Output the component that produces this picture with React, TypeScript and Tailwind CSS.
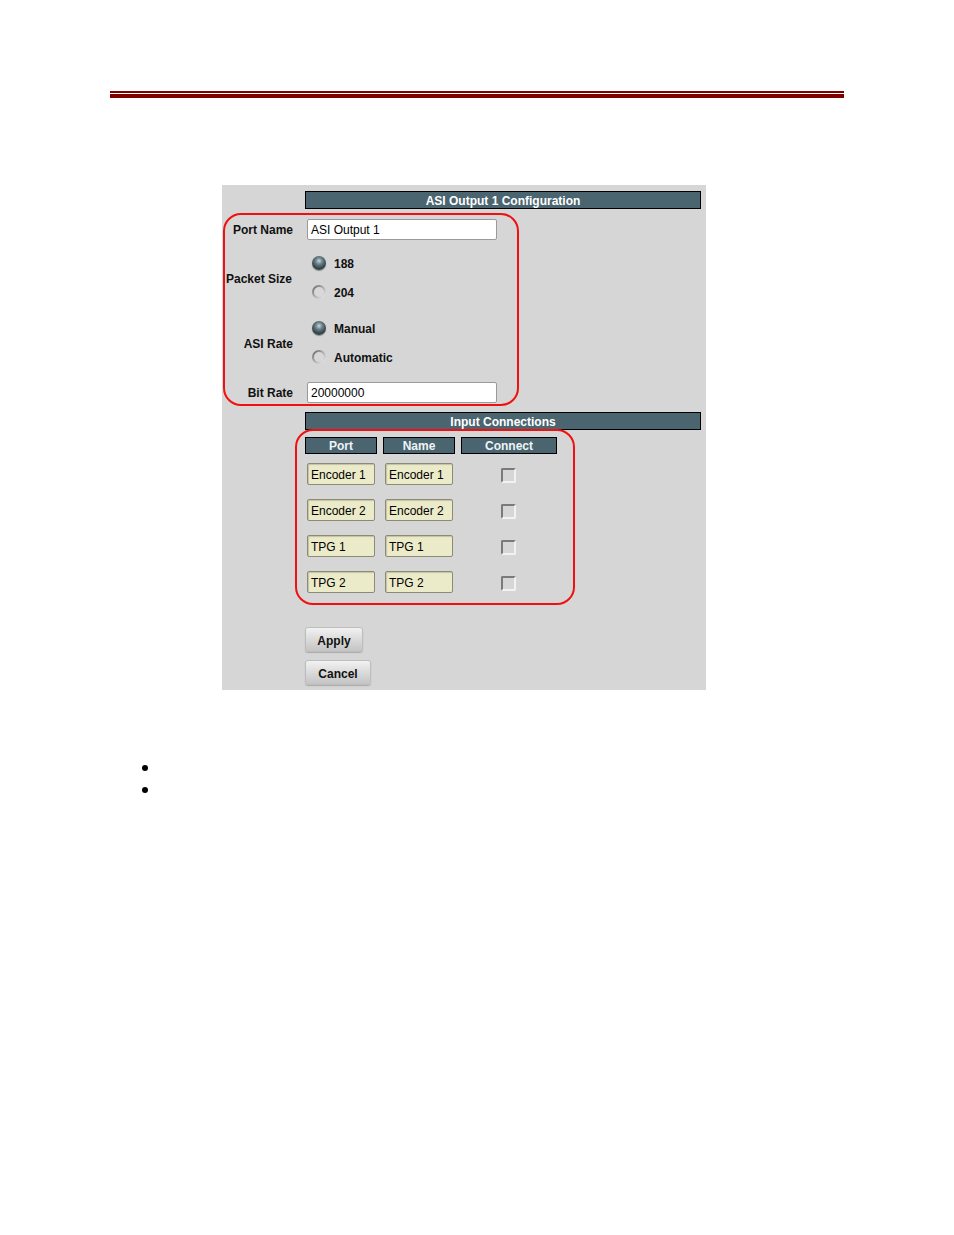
const font = { fontFamily: '"Liberation Sans", Arial, sans-serif' };

const Radio = ({ checked, label }: { checked?: boolean; label: string }) => (
  <div className="flex items-center h-[20px] pl-[5px]">
    {checked ? (
      <span className="w-[14px] h-[14px] rounded-full bg-[radial-gradient(circle_at_50%_35%,#c9d6da_0%,#6f858d_28%,#3a4b52_60%,#1c2529_100%)] shadow-[0_1px_1px_rgba(0,0,0,0.35)]" />
    ) : (
      <span className="w-[14px] h-[14px] rounded-full bg-[linear-gradient(135deg,#5e5e5e_0%,#a8a8a8_45%,#f4f4f4_100%)] flex items-center justify-center">
        <span className="w-[10px] h-[10px] rounded-full bg-[#d8d8d8]" />
      </span>
    )}
    <span className="ml-[8px] pt-[1px] text-[12px] font-bold text-[#111]">{label}</span>
  </div>
);

const Field = ({ value }: { value: string }) => (
  <div className="w-[68px] h-[22px] flex items-center pl-[3px] pt-[1px] text-[12px] text-black bg-[#ecebc9] border border-[#8c8b76] rounded-[2px] shadow-[inset_1px_1px_1px_rgba(0,0,0,0.18)]">
    {value}
  </div>
);

const Check = () => (
  <div className="w-[15px] h-[15px] rounded-[2px] border-2 border-t-[#7a7a7a] border-l-[#7a7a7a] border-b-[#f2f2f2] border-r-[#f2f2f2]" />
);

const Header = ({ title }: { title: string }) => (
  <div className="ml-[83px] w-[396px] h-[18px] pt-[1px] bg-[#4a6570] border border-black flex items-center justify-center text-[12px] font-bold text-white">
    {title}
  </div>
);

const rows = ["Encoder 1", "Encoder 2", "TPG 1", "TPG 2"];

export default function App() {
  return (
    <div className="w-[954px] h-[1235px] bg-white overflow-hidden" style={font}>
      {/* Top rule */}
      <div className="pt-[91px] px-[110px]">
        <div className="h-[2px] bg-[#800000]" />
        <div className="mt-[1px] h-[4px] bg-[#800000]" />
      </div>

      {/* Panel */}
      <div className="mt-[87px] ml-[222px] w-[484px] h-[505px] pt-[6px] bg-[#d6d6d6]">
        <Header title="ASI Output 1 Configuration" />

        <div className="mt-[4px] ml-[1px] w-[296px] h-[193px] border-2 border-[#f01010] rounded-[18px] pt-[4px]">
          <div className="flex items-center">
            <div className="w-[68px] pt-[1px] text-right text-[12px] font-bold text-[#111]">Port Name</div>
            <div className="ml-[14px] w-[190px] h-[21px] pt-[1px] bg-white border border-[#9a9a9a] rounded-[2px] flex items-center pl-[3px] text-[12px] text-black">
              ASI Output 1
            </div>
          </div>

          <div className="mt-[13px] flex items-center">
            <div className="w-[68px] pt-[2px] text-right text-[12px] font-bold text-[#111] -ml-[1px]">Packet Size</div>
            <div className="ml-[15px] flex flex-col gap-[9px]">
              <Radio checked label="188" />
              <Radio label="204" />
            </div>
          </div>

          <div className="mt-[16px] flex items-center">
            <div className="w-[68px] pt-[2px] text-right text-[12px] font-bold text-[#111]">ASI Rate</div>
            <div className="ml-[14px] flex flex-col gap-[9px]">
              <Radio checked label="Manual" />
              <Radio label="Automatic" />
            </div>
          </div>

          <div className="mt-[15px] flex items-center">
            <div className="w-[68px] pt-[1px] text-right text-[12px] font-bold text-[#111]">Bit Rate</div>
            <div className="ml-[14px] w-[190px] h-[21px] pt-[1px] bg-white border border-[#9a9a9a] rounded-[2px] flex items-center pl-[3px] text-[12px] text-black">
              20000000
            </div>
          </div>
        </div>

        <div className="mt-[6px]">
          <Header title="Input Connections" />
        </div>

        <div className="-mt-[1px] ml-[73px] w-[280px] h-[176px] border-2 border-[#f01010] rounded-[18px] pt-[6px]">
          <div className="flex ml-[8px] gap-[6px] text-[12px] font-bold text-[#eef4f4]">
            <div className="w-[72px] h-[17px] pt-[1px] bg-[#4a6570] border border-black flex items-center justify-center">Port</div>
            <div className="w-[72px] h-[17px] pt-[1px] bg-[#4a6570] border border-black flex items-center justify-center">Name</div>
            <div className="w-[96px] h-[17px] pt-[1px] bg-[#4a6570] border border-black flex items-center justify-center">Connect</div>
          </div>
          <div className="mt-[9px] ml-[10px] flex flex-col gap-[14px]">
            {rows.map((r) => (
              <div key={r} className="flex items-center">
                <Field value={r} />
                <div className="ml-[10px]">
                  <Field value={r} />
                </div>
                <div className="ml-[48px] mt-[2px]">
                  <Check />
                </div>
              </div>
            ))}
          </div>
        </div>

        <div className="mt-[22px] ml-[83px] flex flex-col items-start gap-[8px]">
          {["Apply", "Cancel"].map((b) => (
            <button
              key={b}
              className={`${b === "Apply" ? "w-[58px]" : "w-[66px]"} h-[25px] pt-[2px] rounded-[3px] border border-[#bdbdbd] bg-[linear-gradient(#f2f2f2,#d8d8d8_55%,#c4c4c4)] shadow-[0_1px_1px_rgba(0,0,0,0.2)] text-[12px] font-bold text-[#111]`}
            >
              {b}
            </button>
          ))}
        </div>
      </div>

      {/* Bullets */}
      <div className="mt-[75px] ml-[142px] flex flex-col gap-[16px]">
        <span className="w-[6px] h-[6px] rounded-full bg-black" />
        <span className="w-[6px] h-[6px] rounded-full bg-black" />
      </div>
    </div>
  );
}
